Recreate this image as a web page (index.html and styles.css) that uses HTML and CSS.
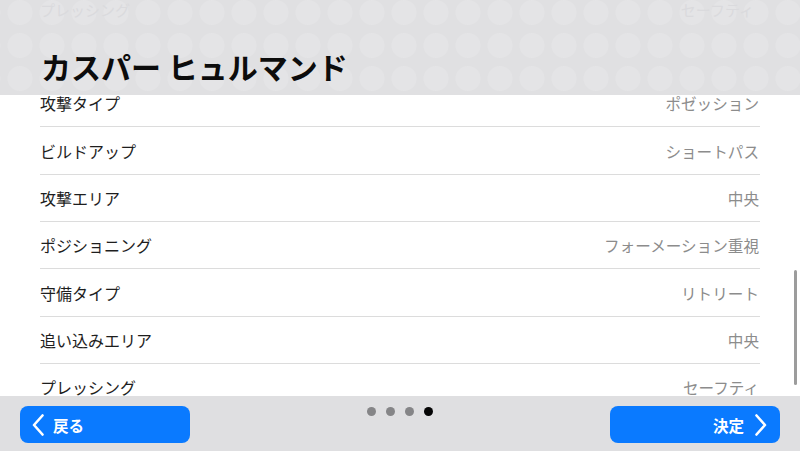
FILE: index.html
```html
<!DOCTYPE html>
<html lang="ja">

<head>
    <meta charset="UTF-8">
    <meta name="viewport" content="width=device-width, initial-scale=1.0">
    <title>チーム戦術</title>
    <link rel="stylesheet" href="styles.css">
</head>

<body>
    <div class="screen">
        <ul class="list">
            <li class="row"><span class="label">攻撃タイプ</span><span class="value">ポゼッション</span></li>
            <li class="row"><span class="label">ビルドアップ</span><span class="value">ショートパス</span></li>
            <li class="row"><span class="label">攻撃エリア</span><span class="value">中央</span></li>
            <li class="row"><span class="label">ポジショニング</span><span class="value">フォーメーション重視</span></li>
            <li class="row"><span class="label">守備タイプ</span><span class="value">リトリート</span></li>
            <li class="row"><span class="label">追い込みエリア</span><span class="value">中央</span></li>
            <li class="row"><span class="label">プレッシング</span><span class="value">セーフティ</span></li>
        </ul>

        <div class="header">
            <div class="ghost">
                <span>プレッシング</span>
                <span>セーフティ</span>
            </div>
            <h1 class="title">カスパー ヒュルマンド</h1>
        </div>

        <div class="scrollbar"></div>

        <div class="footer">
            <button type="button" class="btn btn-back">
                <svg width="12" height="22" viewBox="0 0 12 22"><path d="M10.5 1.5 L2 11 L10.5 20.5" fill="none" stroke="#fff" stroke-width="2.6" stroke-linecap="round" stroke-linejoin="round"/></svg>
                <span>戻る</span>
            </button>
            <div class="dots">
                <span class="dot"></span>
                <span class="dot"></span>
                <span class="dot"></span>
                <span class="dot active"></span>
            </div>
            <button type="button" class="btn btn-next">
                <span>決定</span>
                <svg width="12" height="22" viewBox="0 0 12 22"><path d="M1.5 1.5 L10 11 L1.5 20.5" fill="none" stroke="#fff" stroke-width="2.6" stroke-linecap="round" stroke-linejoin="round"/></svg>
            </button>
        </div>
    </div>
</body>

</html>
```

FILE: styles.css
```css
body {
    margin: 0;
    font-family: "Noto Sans CJK JP", "Noto Sans", sans-serif;
    background: #ffffff;
}

.screen {
    position: relative;
    width: 800px;
    height: 451px;
    overflow: hidden;
    background: #ffffff;
}

.list {
    list-style: none;
    margin: 80px 40px 0 40px;
    padding: 0;
}

.row {
    display: flex;
    justify-content: space-between;
    align-items: center;
    height: 47.35px;
    box-sizing: border-box;
    border-bottom: 1px solid #dcdcdc;
    font-size: 16px;
}

.label {
    color: #1e1e1e;
}

.value {
    color: #8c8c8c;
    font-size: 15.6px;
    margin-right: 1px;
}

.header {
    position: absolute;
    top: 0;
    left: 0;
    right: 0;
    height: 95px;
    background-color: #e0e0e2;
    background-image: radial-gradient(circle, #e4e4e6 12px, transparent 13px);
    background-size: 32px 33px;
    background-position: 4px -4px;
}

.ghost {
    display: flex;
    justify-content: space-between;
    padding: 0 46px 0 40px;
    height: 20px;
    line-height: 20px;
    font-size: 15px;
    color: #dadadd;
}

.title {
    margin: 26px 0 0 41px;
    font-size: 30px;
    font-weight: bold;
    color: #0c0c0c;
    line-height: 40px;
}

.scrollbar {
    position: absolute;
    right: 3px;
    top: 270px;
    width: 3px;
    height: 115px;
    border-radius: 2px;
    background: #9c9c9c;
}

.footer {
    position: absolute;
    left: 0;
    right: 0;
    bottom: 0;
    height: 55px;
    box-sizing: border-box;
    padding: 10px 20px 0 20px;
    background: #dfdfe1;
    display: flex;
    justify-content: space-between;
    align-items: flex-start;
}

.btn {
    display: flex;
    align-items: center;
    gap: 9px;
    width: 170px;
    height: 37px;
    padding: 0 12px;
    border: none;
    border-radius: 8px;
    background: #0a7aff;
    color: #ffffff;
    font-family: inherit;
    font-size: 15.5px;
    font-weight: bold;
}

.btn-next {
    justify-content: flex-end;
    gap: 11px;
    padding-right: 13px;
}

.dots {
    display: flex;
    gap: 10px;
    padding-top: 1px;
    margin-left: -1px;
}

.dot {
    width: 9px;
    height: 9px;
    border-radius: 50%;
    background: #858587;
}

.dot.active {
    background: #050505;
}
```
